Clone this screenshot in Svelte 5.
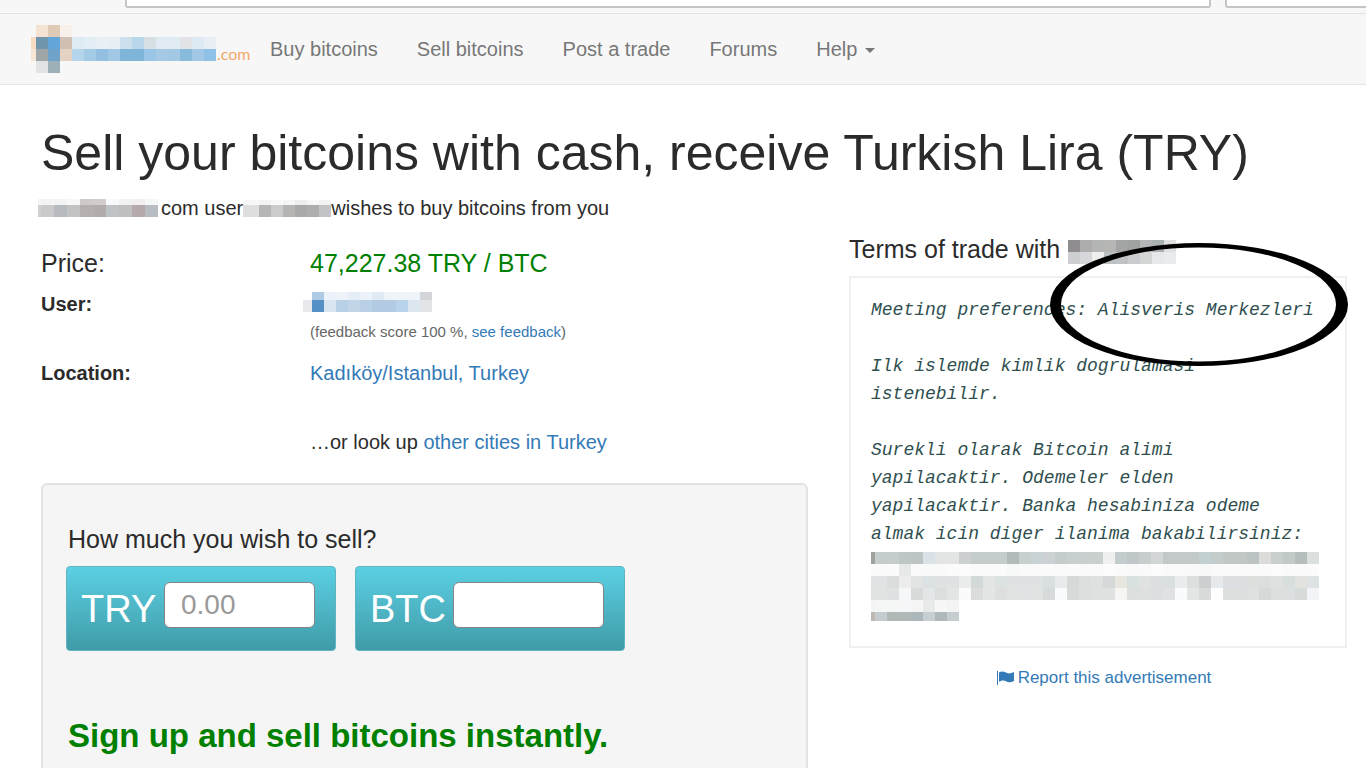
<script lang="ts">
  interface Mosaic {
    x?: number;
    lead?: number;
    cell: number;
    heights: number[];
    rows: string[];
  }

  // each row: lead block first, then equal cells; "-" leaves a gap
  const logo: Mosaic = {
    x: -5,
    lead: 5,
    cell: 12,
    heights: [12, 12, 12, 12],
    rows: [
      '- f4e3d3 dfcbb5 f7f0ea',
      'f7dcc3 7096ae 64a5da cfc0b3 dfebf3 e3edf4 e8eff5 e7eff5 cde0ed b9d7eb d6dfe4 e0eaf3 e0eaf3 e2e3e6 dde9f3 e8eef3',
      'f8e6d6 a0a6a8 6fa3ca e4d3c3 b5d5ec a4cbe6 93c0e2 a1c8e5 80b5da 80b5da 99c6e6 a6cae5 a2c8e4 88badc a2c8e5 8fc2e6',
      '- e1e3e4 9dafb7',
    ],
  };
  const siteName: Mosaic = {
    x: -3,
    lead: 3,
    cell: 13,
    heights: [6, 12],
    rows: [
      'f4f4f4 f4f4f4 f4f4f4 f7f7f8 cfc9c9 d3cccc f8f9fa f1f2f3 f3eff0 f5f6f7',
      'd2d0d0 cbcaca b7babf c3c3c4 b5afaf b3acad bfc3c6 c0bfbf b5abad b7bdc3',
    ],
  };
  const userName: Mosaic = {
    lead: 4,
    cell: 12,
    heights: [5, 12],
    rows: [
      'f7f7f7 f7f7f7 f3f3f3 f9f9f9 f5f5f5 eeeeee f7f7f7 f2f2f2',
      'dedede dedede b5b5b5 cbcbcb b6b4b2 a9a9aa adadae c1c3c5',
    ],
  };
  const userLink: Mosaic = {
    x: -7,
    lead: 9,
    cell: 12,
    heights: [8, 12],
    rows: [
      '- afcae4 ecf2f9 edf3f9 e5edf6 ecf2f9 e0eaf4 eef4fa eef4fa eef4fa d3d5d9',
      'e7e7ec 548fc6 d9e6f2 b9d1e7 c1d4e8 b9cfe5 b3cae3 b3cae3 b9d3ea dce6ef e3e4e8',
    ],
  };
  const trader: Mosaic = {
    cell: 12,
    heights: [12, 12],
    rows: [
      '- 8f8d90 adadae b3b4b4 b6b6b5 a3a4a4 a0a2a2 b3b5b7 aab1b3 dfe0e2',
      '- cdcfd2 d7d8dc eeeeec bcc0c3 c0c3c5 cacdd0 d4d5d5 e6e8ea e9ebed',
    ],
  };
  const termsTail: Mosaic = {
    lead: 4,
    cell: 12,
    heights: [12, 12, 12, 12, 12, 9],
    rows: [
      '9fa39f c5cccc c5cccc bfc6c6 bcc4c4 d9e3e7 e3e5e5 e3e5e5 cdd0d0 c5cccc c5cccc c5cccc b2bbba c8cfcf c9d3d6 cdd1d3 c5cccc c8d0cf c8cfce c9d0ce f0f0f0 c3cdcd c0c7c8 c8cdce d2d6d6 c2c9c8 c2c9c8 c2c9c8 c2d0d1 c4cbcb c0c7c5 c0c7c5 bcc4c3 dcdddb c9cfcd c2cac8 b5bebc dbdfde',
      'fafafa fafafa fbfbfb e7e9e8 fafafa f9f9f9 f9f9f9 fbfbfb fcfcfc fafafa fafafa fbfbfb f7f8f8 fafafa fafafa fbfbfb fafafa fbfbfb fafafa fafafa fcfcfc fafafa f9f9f9 fafafa fcfcfc fafafa fafafa f9f9f9 f8f8f8 fafafa fbfbfb fafafa fafafa fafafa fcfcfc fafafa fafafa fbfbfb',
      'dfe3e3 dfe3e3 dadddc ebeceb e2e4e3 dce1e3 dfe2e2 dfe2e2 ebecec d2d9d8 e3e5e5 dce1e2 dfe2e2 dfe2e2 dfe2e3 d9dedf e7ebec d5dad9 dbdedd dfe1e1 d5d9d9 e7e7e0 d9e0e0 e0e2e1 dbdedf d9dedf e9edee dddfde cdd0d1 e7eaec dbdfe1 dbdfe1 dddfdd dcdedd dfe1e0 d8dddd e2e3df dde3e5',
      'e0e2e2 e1e3e3 dfe2e2 f5f7f9 d8dbda e3e6e6 dbdedd e3e5e5 fbfbfb dadddc e4e5e5 dcdfde e1e3e2 dfe2e2 e1e3e2 d7dada fafbfd d8dad9 dcdfde dfe1e1 e0e2e1 f5f5f4 dbdfde dde0df dcdfdf dfe1e2 fafbfc e4e6e5 d9dbda fefefe dcdfde dcdfde dfe1e0 d5d9d8 dcdfde dbdfdf d6dad9 f3f4f8',
      'f4f4f4 f5f6f6 f5f6f6 f7f7f9 f5f5f5 e8eae9 f7f7f8 f3f4f3',
      'bfb9b2 c4cccd b0b8b8 b0b8b8 abb7bb c6cfd1 b0b9ba c6cdce',
    ],
  };

  const links = ['Buy bitcoins', 'Sell bitcoins', 'Post a trade', 'Forums'];

  const terms = `Meeting preferences: Alisveris Merkezleri

Ilk islemde kimlik dogrulamasi
istenebilir.

Surekli olarak Bitcoin alimi
yapilacaktir. Odemeler elden
yapilacaktir. Banka hesabiniza odeme
almak icin diger ilanima bakabilirsiniz:`;

  let tryAmount = $state('');
  let btcAmount = $state('');

  function blocks(m: Mosaic) {
    const start = m.x ?? 0;
    const lead = m.lead ?? 0;
    let y = 0;
    return m.rows.flatMap((row, r) => {
      const top = y;
      y += m.heights[r];
      return row.split(' ').map((fill, i) => ({
        x: i === 0 ? start : start + lead + (i - 1) * m.cell,
        y: top,
        width: i === 0 ? lead : m.cell,
        height: m.heights[r],
        fill,
      })).filter((b) => b.fill !== '-');
    });
  }

  function mosaicWidth(m: Mosaic) {
    const cells = Math.max(...m.rows.map((row) => row.split(' ').length - 1));
    return (m.x ?? 0) + (m.lead ?? 0) + cells * m.cell;
  }
</script>

{#snippet mosaic(m: Mosaic)}
  <svg class="mosaic" width={mosaicWidth(m)} height={m.heights.reduce((a, b) => a + b, 0)} aria-hidden="true">
    {#each blocks(m) as b}
      <rect x={b.x} y={b.y} width={b.width} height={b.height} fill={'#' + b.fill} />
    {/each}
  </svg>
{/snippet}

<div class="toolbar">
  <div class="address"></div>
  <div class="search"></div>
</div>

<nav class="navbar">
  <a class="brand" href="#home">
    {@render mosaic(logo)}
    <span>.com</span>
  </a>
  <div class="links">
    {#each links as link}
      <a href="#nav">{link}</a>
    {/each}
    <a href="#help">Help <i class="caret"></i></a>
  </div>
</nav>

<main>
  <h1>Sell your bitcoins with cash, receive Turkish Lira (TRY)</h1>
  <p class="subtitle">
    {@render mosaic(siteName)}
    <span class="site">com user</span>
    {@render mosaic(userName)}
    <span>wishes to buy bitcoins from you</span>
  </p>

  <div class="columns">
    <section>
      <dl class="details">
        <dt class="price-label">Price:</dt>
        <dd class="price">47,227.38 TRY / BTC</dd>
        <dt>User:</dt>
        <dd>
          <a class="user" href="#user" aria-label="User profile">{@render mosaic(userLink)}</a>
          <small>(feedback score 100 %, <a href="#feedback">see feedback</a>)</small>
        </dd>
        <dt>Location:</dt>
        <dd>
          <a href="#location">Kadıköy/Istanbul, Turkey</a>
          <p class="lookup">…or look up <a href="#cities">other cities in Turkey</a></p>
        </dd>
      </dl>

      <form class="well">
        <h3>How much you wish to sell?</h3>
        <div class="amounts">
          <div class="amount">
            <label for="amount-try">TRY</label>
            <input id="amount-try" type="text" placeholder="0.00" bind:value={tryAmount} />
          </div>
          <div class="amount">
            <label for="amount-btc">BTC</label>
            <input id="amount-btc" type="text" bind:value={btcAmount} />
          </div>
        </div>
        <h2>Sign up and sell bitcoins instantly.</h2>
      </form>
    </section>

    <aside>
      <h3 class="terms-title">Terms of trade with {@render mosaic(trader)}</h3>
      <div class="terms">
        <pre>{terms}</pre>
        {@render mosaic(termsTail)}
        <svg class="marker" viewBox="0 0 298 123" aria-hidden="true">
          <path
            fill-rule="evenodd"
            d="M0 61.5a149 61.5 0 1 0 298 0a149 61.5 0 1 0 -298 0ZM11 61.5a137.500 57 0 1 1 275 0a137.500 57 0 1 1 -275 0Z"
          />
        </svg>
      </div>
      <a class="report" href="#report">
        <svg width="17" height="14" viewBox="0 0 17 14" aria-hidden="true">
          <path d="M0 0h1v14H0zM2 1.500c2-1.500 4-1.500 7 0s5 1 8-.5v9c-3 1.500-6 1.500-8 .3s-4-1-7 .5z" />
        </svg>
        Report this advertisement
      </a>
    </aside>
  </div>
</main>

<style>
  :global(body) {
    margin: 0;
    background: #fff;
    color: #2b2b2b;
    font-family: "Liberation Sans", Arial, sans-serif;
    font-size: 20px;
    line-height: 28px;
    overflow: hidden;
  }

  a {
    color: #337ab7;
    text-decoration: none;
  }

  h1,
  h2,
  h3,
  p,
  dl,
  dd,
  pre {
    margin: 0;
  }

  h1,
  h3 {
    font-weight: 400;
  }

  .mosaic {
    flex: none;
    overflow: visible;
    shape-rendering: crispEdges;
  }

  .toolbar {
    display: grid;
    grid-template-columns: 1fr 141px;
    gap: 14px;
    height: 13px;
    padding-left: 125px;
    background: #f7f7f7;
    border-bottom: 1px solid #e2e2e2;
  }

  .address,
  .search {
    height: 6px;
    background: #fff;
    border: 2px solid #c4c4c4;
    border-top: 0;
    border-radius: 0 0 3px 3px;
  }

  .search {
    border-right: 0;
    border-bottom-right-radius: 0;
  }

  .navbar {
    display: flex;
    align-items: center;
    height: 70px;
    padding-left: 36px;
    background: #f7f7f7;
    border-bottom: 1px solid #e5e5e5;
  }

  .brand {
    display: flex;
    align-items: center;
    gap: 1px;
    width: 234px;
  }

  .brand span {
    padding-top: 10px;
    color: #f2a869;
    font-family: Lato, sans-serif;
    font-size: 16px;
    line-height: 20px;
  }

  .links {
    display: flex;
    gap: 39px;
  }

  .links a {
    color: #777;
  }

  .caret {
    display: inline-block;
    margin-left: 2px;
    vertical-align: middle;
    border: 5px solid transparent;
    border-top-color: #777;
    border-bottom: 0;
  }

  main {
    padding: 40px 19px 0 41px;
  }

  h1 {
    font-size: 50px;
    line-height: 56px;
  }

  .subtitle {
    display: flex;
    align-items: center;
    margin-top: 13px;
  }

  .site {
    padding-left: 3px;
  }

  .columns {
    display: grid;
    grid-template-columns: 767fr 498fr;
    gap: 41px;
    margin-top: 12px;
  }

  .details {
    display: grid;
    grid-template-columns: 269px 1fr;
    row-gap: 13px;
    padding: 15px 0 27px;
  }

  dt {
    font-weight: 700;
  }

  .price-label,
  .price {
    font-size: 25px;
    font-weight: 400;
  }

  .price {
    color: #008000;
  }

  .user {
    display: flex;
    align-items: center;
    height: 24px;
  }

  small {
    display: block;
    margin-top: 4px;
    color: #666;
    font-size: 15px;
    line-height: 28px;
  }

  .lookup {
    margin-top: 41px;
  }

  .well {
    padding: 39px 23px;
    background: #f5f5f5;
    border: 2px solid #e3e3e3;
    border-radius: 6px;
  }

  .well h2,
  .well h3 {
    padding-left: 2px;
  }

  h3 {
    font-size: 25px;
    line-height: 30px;
  }

  .amounts {
    display: flex;
    gap: 19px;
    margin: 12px 0 65px;
  }

  .amount {
    display: flex;
    box-sizing: border-box;
    width: 270px;
    height: 85px;
    padding: 15px 20px 0 14px;
    justify-content: space-between;
    border: 1px solid #5fb4c0;
    border-radius: 4px;
    background: linear-gradient(#5bd0e3, #409ba8);
  }

  .amount label {
    color: #fff;
    font-size: 38px;
    line-height: 54px;
  }

  .amount input {
    box-sizing: border-box;
    width: 151px;
    height: 46px;
    padding: 0 16px;
    border: 1px solid #858585;
    border-radius: 6px;
    background: #fff;
    color: #555;
    font-family: inherit;
    font-size: 28px;
  }

  .amount input::placeholder {
    color: #999;
  }

  h2 {
    color: #008000;
    font-size: 33px;
    line-height: 40px;
  }

  .terms-title {
    display: flex;
    align-items: flex-end;
    gap: 8px;
  }

  .terms {
    position: relative;
    margin-top: 12px;
    padding: 18px 20px 25px;
    border: 2px solid #f0f0f0;
  }

  pre {
    margin-bottom: 4px;
    color: #2f4f4f;
    font-family: "Liberation Mono", "Courier New", monospace;
    font-size: 18px;
    font-style: italic;
    line-height: 28px;
  }

  .terms .mosaic {
    display: block;
  }

  .marker {
    position: absolute;
    top: -35px;
    right: -3px;
    width: 298px;
    height: 123px;
  }

  .report {
    display: flex;
    align-items: center;
    justify-content: center;
    gap: 4px;
    margin-top: 16px;
    padding-left: 12px;
    font-size: 17px;
  }

  .report svg {
    fill: #337ab7;
  }
</style>
